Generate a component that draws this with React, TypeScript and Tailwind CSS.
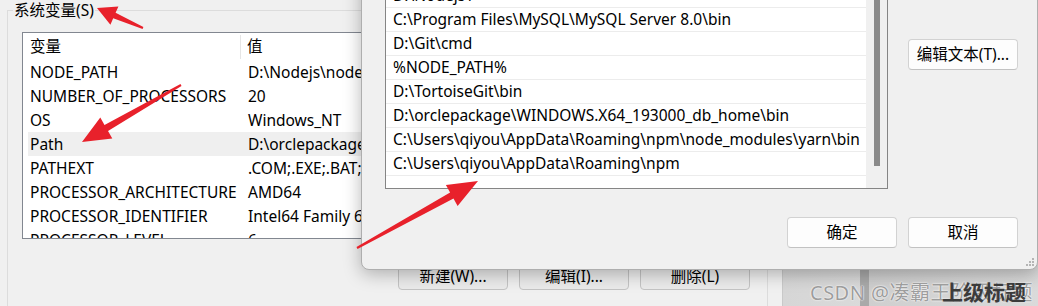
const SYS_VARS = [
  { name: 'NODE_PATH', value: 'D:\\Nodejs\\node_global\\node_modules' },
  { name: 'NUMBER_OF_PROCESSORS', value: '20' },
  { name: 'OS', value: 'Windows_NT' },
  { name: 'Path', value: 'D:\\orclepackage\\WINDOWS.X64_193000_db_home\\bin', active: true },
  { name: 'PATHEXT', value: '.COM;.EXE;.BAT;.CMD;.VBS;.VBE;.JS;.JSE' },
  { name: 'PROCESSOR_ARCHITECTURE', value: 'AMD64' },
  { name: 'PROCESSOR_IDENTIFIER', value: 'Intel64 Family 6 Model 154 Stepping 3' },
  { name: 'PROCESSOR_LEVEL', value: '6' },
]

const PATH_ITEMS = [
  'D:\\Nodejs\\node_global',
  'D:\\Nodejs\\',
  'C:\\Program Files\\MySQL\\MySQL Server 8.0\\bin',
  'D:\\Git\\cmd',
  '%NODE_PATH%',
  'D:\\TortoiseGit\\bin',
  'D:\\orclepackage\\WINDOWS.X64_193000_db_home\\bin',
  'C:\\Users\\qiyou\\AppData\\Roaming\\npm\\node_modules\\yarn\\bin',
  'C:\\Users\\qiyou\\AppData\\Roaming\\npm',
]

// tail -> tip arrows drawn over the screenshot
const ARROWS = [
  { tail: [143, 28], tip: [97, 8], head: 19, wing: 10, w0: 2, w1: 6 },
  { tail: [181, 85], tip: [82, 142], head: 28, wing: 12, w0: 2, w1: 7 },
  { tail: [357, 248], tip: [478, 181], head: 30, wing: 12, w0: 2, w1: 7 },
]

export default function App() {
  return (
    <div className="relative h-[306px] w-[1038px] overflow-hidden bg-[#f0f0f0] font-['Noto_Sans','Noto_Sans_CJK_SC',sans-serif] text-[15.5px] text-black">
      <div className="flex h-full">
        <div className="w-[782px] shrink-0 pl-[7px] pt-[10px]">
          <div className="relative h-[320px] w-[761px] border border-[#dcdcdc] pl-[14px] pr-[17px] pt-[21px]">
            <span className="absolute left-[5px] top-[-12px] bg-[#f0f0f0] px-[1px] leading-[22px]">系统变量(S)</span>
            <VarList />
            <div className="mt-[21px] flex justify-end gap-[11px]">
              <BackButton label="新建(W)..." />
              <BackButton label="编辑(I)..." />
              <BackButton label="删除(L)" />
            </div>
          </div>
        </div>
        <div className="flex flex-1 border-l border-[#c9c9c9] bg-gradient-to-r from-[#d6d6d6] to-[#e2e2e2]">
          <div className="w-[77px]" />
          <div className="w-[9px] bg-[#a9a9a9]" />
          <div className="flex-1 bg-gradient-to-r from-[#cfcfcf] to-[#dadada]" />
        </div>
      </div>

      <EditDialog />
      <Arrows />

      <div className="pointer-events-none absolute left-[810px] top-[281px] whitespace-nowrap text-[20px] leading-[24px] tracking-[0.5px] text-[#9d9d9d] [text-shadow:0_0_2px_#fff,0_0_1px_#fff]">
        CSDN @凑霸王阶级标题
      </div>
      <div className="pointer-events-none absolute left-[942px] top-[280px] whitespace-nowrap text-[21px] font-bold leading-[24px] text-[#3b3b3b]">
        上级标题
      </div>
    </div>
  )
}

function VarList() {
  return (
    <div className="h-[207px] w-[730px] overflow-hidden border border-[#828790] bg-white">
      <div className="flex h-[27px] items-center">
        <div className="w-[217px] pl-[7px]">变量</div>
        <div className="h-[24px] w-px bg-[#e5e5e5]" />
        <div className="pl-[6px]">值</div>
      </div>
      {SYS_VARS.map((v) => (
        <div
          key={v.name}
          className={`ml-[5px] flex h-[24px] items-center whitespace-nowrap pt-[1px] ${v.active ? 'bg-[#efefef]' : ''}`}
        >
          <div className="w-[213px] pl-[2px]">{v.name}</div>
          <div className="pl-[7px]">{v.value}</div>
        </div>
      ))}
    </div>
  )
}

function BackButton({ label }: { label: string }) {
  return (
    <div className="flex h-[30px] w-[110px] items-center justify-center rounded-[4px] border border-[#c4c4c4] bg-[#ebebeb] pt-[3px]">
      {label}
    </div>
  )
}

function DlgButton({ label }: { label: string }) {
  return (
    <div className="flex h-[31px] w-[110px] items-center justify-center rounded-[4px] border border-[#d2d2d2] border-b-[#c2c2c2] bg-[#fdfdfd]">
      {label}
    </div>
  )
}

function EditDialog() {
  return (
    <div className="absolute left-[361px] top-[-60px] h-[330px] w-[677px] rounded-b-[8px] border border-[#aeaeae] bg-[#f0f0f0] pl-[23px] pr-[19px] pt-[18px] shadow-[0_4px_18px_rgba(0,0,0,0.28)]">
      <div className="flex gap-[20px]">
        <div className="flex h-[230px] w-[503px] border border-[#858585] bg-white">
          <div className="flex-1">
            {PATH_ITEMS.map((p) => (
              <div key={p} className="flex h-[24px] items-center whitespace-nowrap border-b border-[#ececec] pl-[7px] pt-[1px]">
                {p}
              </div>
            ))}
          </div>
          <div className="w-[21px] bg-[#f0f0f0] pl-[8px] pt-[2px]">
            <div className="h-[204px] w-[6px] bg-[#8a8a8a]" />
          </div>
        </div>
        <div className="pt-[80px]">
          <DlgButton label="编辑文本(T)..." />
        </div>
      </div>
      <div className="mt-[28px] flex justify-end gap-[11px]">
        <DlgButton label="确定" />
        <DlgButton label="取消" />
      </div>
      <svg className="absolute bottom-[2px] right-[2px]" width="10" height="10" viewBox="0 0 10 10">
        {[
          [7, 1],
          [4, 4],
          [7, 4],
          [1, 7],
          [4, 7],
          [7, 7],
        ].map(([x, y]) => (
          <rect key={`${x}-${y}`} x={x} y={y} width="2" height="2" fill="#b4b4b4" />
        ))}
      </svg>
    </div>
  )
}

function arrowPoints(a: (typeof ARROWS)[number]) {
  const [tx, ty] = a.tail
  const [px, py] = a.tip
  const len = Math.hypot(px - tx, py - ty)
  const ux = (px - tx) / len
  const uy = (py - ty) / len
  const nx = -uy
  const ny = ux
  const bx = px - ux * a.head
  const by = py - uy * a.head
  const pts = [
    [tx + (nx * a.w0) / 2, ty + (ny * a.w0) / 2],
    [bx + (nx * a.w1) / 2, by + (ny * a.w1) / 2],
    [bx + nx * a.wing, by + ny * a.wing],
    [px, py],
    [bx - nx * a.wing, by - ny * a.wing],
    [bx - (nx * a.w1) / 2, by - (ny * a.w1) / 2],
    [tx - (nx * a.w0) / 2, ty - (ny * a.w0) / 2],
  ]
  return pts.map(([x, y]) => `${x.toFixed(1)},${y.toFixed(1)}`).join(' ')
}

function Arrows() {
  return (
    <svg className="pointer-events-none absolute inset-0" width="1038" height="306">
      {ARROWS.map((a, i) => (
        <polygon key={i} points={arrowPoints(a)} fill="#e8212b" />
      ))}
    </svg>
  )
}
